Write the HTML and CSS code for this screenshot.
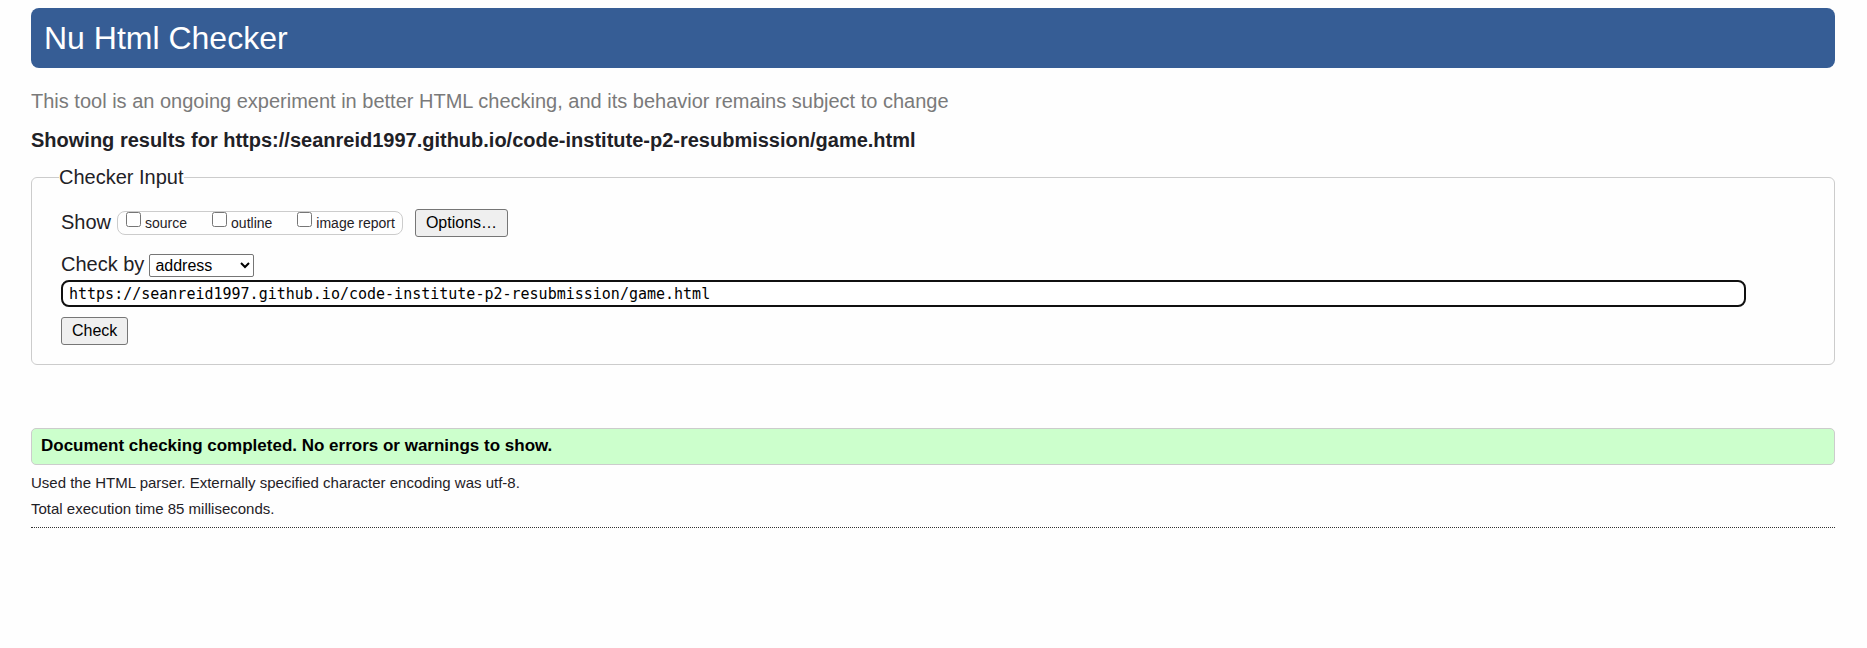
FILE: index.html
```html
<!DOCTYPE html>
<html lang="en">
<head>
<meta charset="utf-8">
<title>Nu Html Checker</title>
<link rel="stylesheet" href="styles.css">
</head>
<body>
<header class="banner"><h1 class="banner-title">Nu Html Checker</h1></header>
<main>
<p class="tagline">This tool is an ongoing experiment in better HTML checking, and its behavior remains subject to change</p>
<h2 class="results-heading">Showing results for https://seanreid1997.github.io/code-institute-p2-resubmission/game.html</h2>
<form>
<fieldset class="checker">
<legend class="checker-legend">Checker Input</legend>
<div class="row show-row">
<span class="label">Show</span>
<div class="toggles">
<label class="toggle"><input class="tick" type="checkbox"><span class="toggle-text">source</span></label>
<label class="toggle"><input class="tick" type="checkbox"><span class="toggle-text">outline</span></label>
<label class="toggle"><input class="tick" type="checkbox"><span class="toggle-text">image report</span></label>
</div>
<button class="button" type="button">Options…</button>
</div>
<div class="row check-row">
<label class="label" for="method">Check by</label>
<select class="method" id="method"><option>address</option><option>file upload</option><option>text input</option></select>
</div>
<input class="address" type="text" aria-label="Address" value="https://seanreid1997.github.io/code-institute-p2-resubmission/game.html">
<button class="button" type="submit">Check</button>
</fieldset>
</form>
<p class="success">Document checking completed. No errors or warnings to show.</p>
<div class="details">
<p class="detail">Used the HTML parser. Externally specified character encoding was utf-8.</p>
<p class="detail">Total execution time 85 milliseconds.</p>
</div>
</main>
</body>
</html>
```
FILE: styles.css
```css
* { box-sizing: border-box; }
body {
  margin: 8px 32px 0 31px;
  background: #fefefe;
  color: #1f2126;
  font: 20px/24px "Liberation Sans", Arial, sans-serif;
}
h1, h2, p { margin: 0; }
.banner {
  padding: 10px 13px;
  border-radius: 8px;
  background: #365d95;
  color: #fff;
}
.banner-title { font-size: 32px; font-weight: 400; line-height: 40px; }
.tagline { margin-top: 21px; color: #7a7a7a; }
.results-heading { margin-top: 15px; font-size: 20px; line-height: 24px; }
.checker {
  margin: 13px 0 0;
  padding: 20px 29px 19px;
  border: 1px solid #ccc;
  border-radius: 6px;
}
.checker-legend { margin-left: -2px; padding: 0; }
.row { display: flex; align-items: center; }
.label { padding-bottom: 3px; }
.toggles {
  display: flex;
  align-items: flex-start;
  gap: 25px;
  height: 24px;
  margin: 0 12px 0 6px;
  padding: 0 7px 0 8px;
  border: 1px solid #ccc;
  border-radius: 8px;
}
.toggle { display: flex; gap: 4px; font-size: 14px; line-height: 22px; }
.tick { width: 15px; height: 15px; margin: 0; }
.button {
  height: 28px;
  padding: 0 10px;
  border: 1px solid #767676;
  border-radius: 3px;
  background: #efefef;
  color: #000;
  font: 16px/24px "Liberation Sans", Arial, sans-serif;
}
.check-row { margin-top: 15px; }
.method {
  width: 105px;
  height: 23px;
  margin-left: 5px;
  padding: 0 1px;
  border: 1px solid #767676;
  border-radius: 2px;
  background: #fff;
  color: #000;
  font: 16px/20px "Liberation Sans", Arial, sans-serif;
}
.address {
  display: block;
  width: calc(100% - 59px);
  height: 27px;
  margin: 1px 0 10px;
  padding: 1px 6px 0;
  border: 2px solid #101010;
  border-radius: 8px;
  background: #fff;
  color: #000;
  font: 15px/20px "DejaVu Sans Mono", monospace;
}
.success {
  margin-top: 63px;
  padding: 5px 9px 6px;
  border: 1px solid #ccc;
  border-radius: 5px;
  background: #cfc;
  color: #000;
  font-size: 17px;
  font-weight: 700;
}
.details { padding: 5px 0; border-bottom: 1px dotted #333; }
.detail { font-size: 15px; line-height: 26px; }
```
